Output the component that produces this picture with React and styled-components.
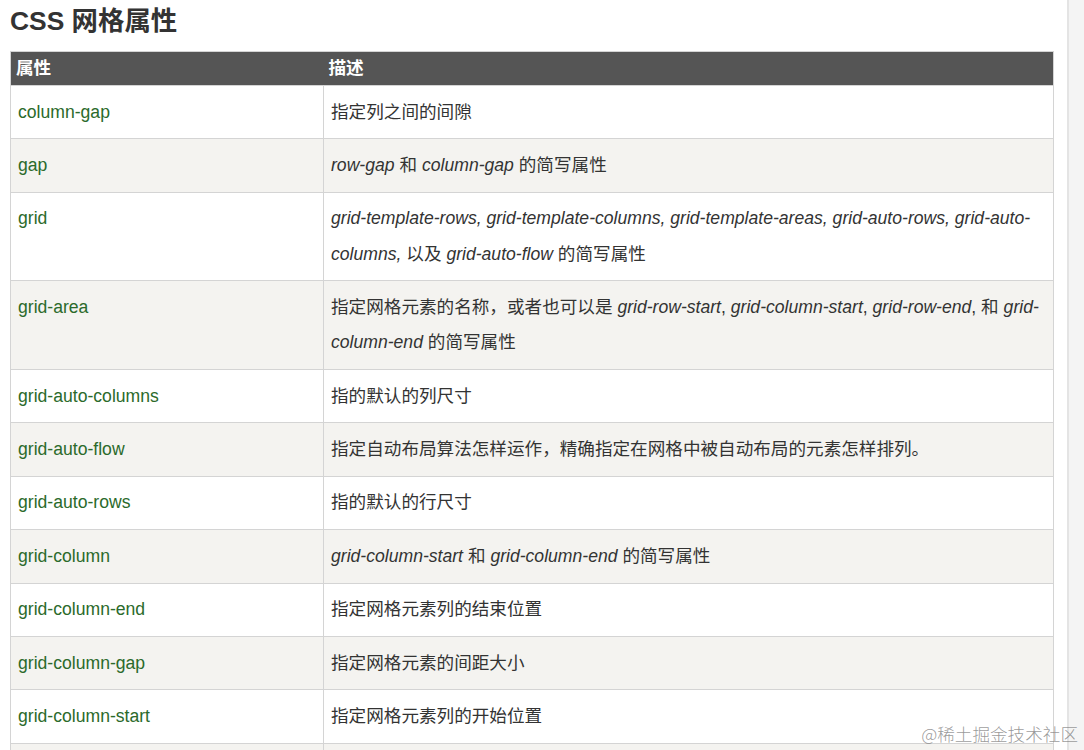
import React from "react";
import styled, { createGlobalStyle } from "styled-components";

const GlobalStyle = createGlobalStyle`
  html, body {
    margin: 0;
    padding: 0;
    height: 750px;
    overflow: hidden;
    background: #fff;
  }
  body {
    font-family: "Liberation Sans", Arial, "Noto Sans CJK SC", sans-serif;
    color: #333;
  }
`;

const Page = styled.div`
  position: relative;
  display: flex;
  width: 1084px;
  height: 750px;
  overflow: hidden;
`;

const Main = styled.div`
  width: 1067px;
  padding: 4px 13px 0 10px;
  box-sizing: border-box;
`;

const SideStrip = styled.div`
  flex: 1;
  border-left: 2px solid #e4e4e4;
  background: #f4f4f4;
`;

const Title = styled.h2`
  margin: 0 0 13px;
  font-size: 26.4px;
  line-height: 34px;
  font-weight: bold;
  color: #333;
  font-family: "Liberation Sans", Arial, "Noto Sans CJK SC", sans-serif;
`;

const Table = styled.table`
  width: 1044px;
  border-collapse: collapse;
  table-layout: fixed;
  font-size: 17.6px;
  border: 1px solid #d4d4d4;
`;

const Th = styled.th`
  background: #555555;
  color: #fff;
  font-weight: bold;
  text-align: left;
  padding: 4px 5px;
  line-height: 25px;
  font-family: "Liberation Sans", Arial, "Noto Sans CJK SC", sans-serif;
`;

const Tr = styled.tr`
  background: ${(props) => (props.$shaded ? "#f4f3f0" : "#ffffff")};
`;

const Td = styled.td`
  border: 1px solid #d4d4d4;
  padding: 8.6px 7px;
  line-height: 35.2px;
  vertical-align: top;
  color: #333;
  font-family: "Liberation Sans", Arial, "Noto Sans CJK SC", sans-serif;
`;

const PropName = styled.span`
  color: #2b6a2b;
`;

const Em = styled.em`
  font-style: italic;
`;

const Watermark = styled.div`
  position: absolute;
  right: 6px;
  bottom: 4px;
  font-size: 17.6px;
  color: rgba(120, 120, 120, 0.75);
  font-family: "Noto Sans CJK SC", sans-serif;
  font-weight: 300;
`;

const rows = [
  { name: "column-gap", desc: <>指定列之间的间隙</> },
  { name: "gap", desc: <><Em>row-gap</Em> 和 <Em>column-gap</Em> 的简写属性</> },
  {
    name: "grid",
    desc: (
      <>
        <Em>grid-template-rows, grid-template-columns, grid-template-areas, grid-auto-rows, grid-auto-columns,</Em> 以及{" "}
        <Em>grid-auto-flow</Em> 的简写属性
      </>
    ),
  },
  {
    name: "grid-area",
    desc: (
      <>
        指定网格元素的名称，或者也可以是 <Em>grid-row-start</Em>, <Em>grid-column-start</Em>, <Em>grid-row-end</Em>, 和{" "}
        <Em>grid-column-end</Em> 的简写属性
      </>
    ),
  },
  { name: "grid-auto-columns", desc: <>指的默认的列尺寸</> },
  { name: "grid-auto-flow", desc: <>指定自动布局算法怎样运作，精确指定在网格中被自动布局的元素怎样排列。</> },
  { name: "grid-auto-rows", desc: <>指的默认的行尺寸</> },
  { name: "grid-column", desc: <><Em>grid-column-start</Em> 和 <Em>grid-column-end</Em> 的简写属性</> },
  { name: "grid-column-end", desc: <>指定网格元素列的结束位置</> },
  { name: "grid-column-gap", desc: <>指定网格元素的间距大小</> },
  { name: "grid-column-start", desc: <>指定网格元素列的开始位置</> },
  { name: "grid-gap", desc: <><Em>grid-row-gap</Em> 和 <Em>grid-column-gap</Em> 的简写属性</> },
];

const App = () => {
  return (
    <Page>
      <GlobalStyle />
      <Main>
        <Title>CSS 网格属性</Title>
        <Table>
          <colgroup>
            <col style={{ width: "313px" }} />
            <col />
          </colgroup>
          <thead>
            <tr>
              <Th>属性</Th>
              <Th>描述</Th>
            </tr>
          </thead>
          <tbody>
            {rows.map((row, i) => (
              <Tr key={row.name} $shaded={i % 2 === 1}>
                <Td>
                  <PropName>{row.name}</PropName>
                </Td>
                <Td>{row.desc}</Td>
              </Tr>
            ))}
          </tbody>
        </Table>
      </Main>
      <SideStrip />
      <Watermark>@稀土掘金技术社区</Watermark>
    </Page>
  );
};

export default App;
